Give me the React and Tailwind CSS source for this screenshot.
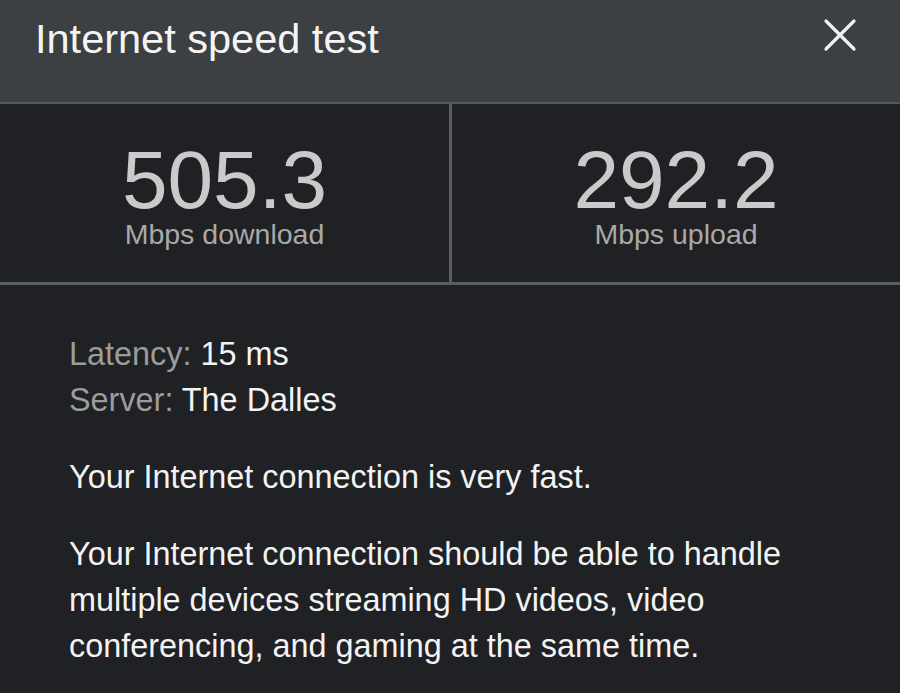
import React from 'react';

const stats = [
  { value: '505.3', label: 'Mbps download' },
  { value: '292.2', label: 'Mbps upload' },
];

const CloseIcon = () => (
  <svg width="34" height="34" viewBox="0 0 34 34" fill="none">
    <path d="M3 3 L31 31 M31 3 L3 31" stroke="#f2f2f2" strokeWidth="3.2" strokeLinecap="round" />
  </svg>
);

const App = () => {
  return (
    <div
      className="w-[900px] h-[693px] overflow-hidden bg-[#202124] flex flex-col"
      style={{ fontFamily: '"Liberation Sans", Arial, sans-serif' }}
    >
      {/* Header */}
      <div className="h-[104px] shrink-0 bg-[#3c4043] border-b-2 border-[#56595c] flex items-start justify-between pl-[35px] pr-[45px] pt-[15px]">
        <h1 className="text-[41.5px] leading-[48px] text-[#f4f4f4] font-normal">Internet speed test</h1>
        <button className="mt-[3px] -mr-[2px]">
          <CloseIcon />
        </button>
      </div>

      {/* Results */}
      <div className="h-[181px] shrink-0 grid grid-cols-[449px_3px_1fr] border-b-[3px] border-[#5c5f62]">
        {stats.map((s, i) => (
          <React.Fragment key={s.label}>
            {i === 1 && <div className="bg-[#5c5f62]" />}
            <div className="flex flex-col items-center pt-[40px]">
              <div className="text-[82px] leading-[72px] text-[#cacaca]">{s.value}</div>
              <div className="text-[28.5px] leading-[32px] text-[#a9a9a9] mt-[2px]">{s.label}</div>
            </div>
          </React.Fragment>
        ))}
      </div>

      {/* Details */}
      <div className="pl-[69px] pr-[40px] pt-[46px] text-[32.4px] leading-[46px] text-[#f3f3f3]">
        <div>
          <span className="text-[#9c9c9c]">Latency:</span> 15 ms
        </div>
        <div>
          <span className="text-[#9c9c9c]">Server:</span> The Dalles
        </div>
        <p className="mt-[31px]">Your Internet connection is very fast.</p>
        <p className="mt-[31px] w-[780px]">
          Your Internet connection should be able to handle multiple devices streaming HD videos, video
          conferencing, and gaming at the same time.
        </p>
      </div>
    </div>
  );
};

export default App;
